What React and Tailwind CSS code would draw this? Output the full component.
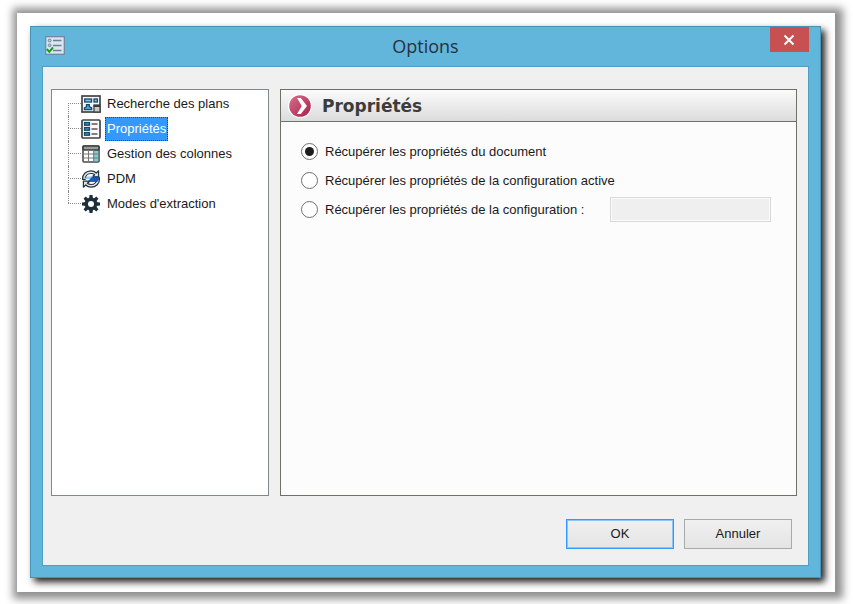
import { useState } from "react";

function PlansIcon() {
  return (
    <svg viewBox="0 0 20 18" className="h-[18px] w-5 shrink-0" aria-hidden="true">
      <rect x="1" y="1" width="18" height="16" fill="#f4f6f7" stroke="#444" strokeWidth="1.700" />
      <rect x="3.7" y="4" width="6.8" height="3" fill="#7fc4e8" stroke="#164a6b" strokeWidth="1.300" />
      <rect x="13" y="4" width="3.4" height="3" fill="#7fc4e8" stroke="#164a6b" strokeWidth="1.300" />
      <path d="M5.5 9.7h2.800v2l2.400 1.200v1.800H3.400v-1.800l2.100-1.200z" fill="#4fa8d8" stroke="#164a6b" strokeWidth="1.300" />
      <rect x="13" y="10" width="6" height="7" fill="#c9c9c9" stroke="#444" strokeWidth="1.300" />
      <path d="M12.500 11h6.500" stroke="#3a3a3a" strokeWidth="2" />
    </svg>
  );
}

function PropertiesIcon() {
  return (
    <svg viewBox="0 0 20 20" className="h-5 w-5 shrink-0" aria-hidden="true">
      <rect x="1" y="1" width="18" height="18" rx="1" fill="#fafafa" stroke="#444" strokeWidth="1.700" />
      {[3.6, 8.6, 13.6].map((y) => (
        <g key={y}>
          <rect x="3.6" y={y} width="4.8" height="2.6" fill="#3f9fd0" stroke="#164a6b" strokeWidth="1.4" />
          <path d={`M10.5 ${y + 1.4}h6`} stroke="#4b4b4b" strokeWidth="1.4" />
        </g>
      ))}
    </svg>
  );
}

function ColumnsIcon() {
  return (
    <svg viewBox="0 0 20 18" className="h-[18px] w-5 shrink-0" aria-hidden="true">
      <rect x="2" y="1" width="16" height="16" rx="1" fill="#fff" stroke="#4b4b4b" strokeWidth="1.6" />
      <rect x="13" y="5" width="4.200" height="11.200" fill="#74d4dc" />
      <rect x="2" y="1" width="16" height="4" rx="1" fill="#9a9a9a" stroke="#3f3f3f" strokeWidth="1.6" />
      <path d="M7.500 5V17M12.700 5V17M2 9h16M2 13h16" stroke="#777" strokeWidth="1.1" />
    </svg>
  );
}

function PdmIcon() {
  return (
    <svg viewBox="0 0 20 20" className="h-5 w-5 shrink-0" aria-hidden="true">
      <path d="M1.500 10.500C1.200 5.500 5 1.800 10 1.800c2.200 0 4 .8 5.300 2.200L17.600 1.800v6h-6.200l2.200-2.100C12.500 4.800 11.200 4.500 10 4.500 6.500 4.500 4.300 7 4.200 10.300z" fill="#dfe6ea" stroke="#25323c" strokeWidth="1.200" strokeLinejoin="round" />
      <path d="M18.500 9.500C18.800 14.500 15 18.200 10 18.200c-2.200 0-4-.8-5.300-2.200L2.400 18.200v-6h6.200l-2.200 2.100c1.100.9 2.400 1.200 3.600 1.200 3.500 0 5.700-2.500 5.800-5.800z" fill="#dfe6ea" stroke="#25323c" strokeWidth="1.200" strokeLinejoin="round" />
      <path d="M5.500 7.800l7-.8-1.800 3H3.200z" fill="#8ecbf5" />
      <path d="M9.200 10.200L11.500 8h7.300l-2.600 4.600H7.200z" fill="#1559c8" stroke="#12305c" strokeWidth=".6" />
    </svg>
  );
}

function GearIcon() {
  return (
    <svg viewBox="0 0 20 20" className="h-5 w-5 shrink-0" aria-hidden="true">
      <g fill="#1c2f3a">
        {[0, 45, 90, 135, 180, 225, 270, 315].map((a) => (
          <path key={a} d="M8 5.200L8.500 1h3l.5 4.200z" transform={`rotate(${a} 10 10)`} />
        ))}
      </g>
      <circle cx="10" cy="10" r="4.700" fill="#fff" stroke="#1c2f3a" strokeWidth="3.400" />
    </svg>
  );
}

function WindowIcon() {
  return (
    <svg viewBox="0 0 20 19" className="h-[19px] w-5 shrink-0" aria-hidden="true">
      <rect x=".7" y=".7" width="18.600" height="17.600" fill="#dce6f2" stroke="#71899f" strokeWidth="1.300" />
      <path d="M8 4.500h8.500M8 9.500h8.500M8 14.500h8.500" stroke="#6c8093" strokeWidth="1.400" />
      <circle cx="4.600" cy="4.500" r="1.400" fill="#c3d2e2" stroke="#6c8093" />
      <circle cx="4.600" cy="9.300" r="1.400" fill="#c3d2e2" stroke="#6c8093" />
      <path d="M1.800 13l2.500 2.800L8 11.500" fill="none" stroke="#13a013" strokeWidth="2" />
    </svg>
  );
}

function ArrowBadge() {
  return (
    <svg viewBox="0 0 24 24" className="h-6 w-6 shrink-0" aria-hidden="true">
      <defs>
        <linearGradient id="badge" x1="0" y1="0" x2="1" y2="1">
          <stop offset="0" stopColor="#d8708c" />
          <stop offset="1" stopColor="#a81f49" />
        </linearGradient>
      </defs>
      <circle cx="12" cy="12" r="12" fill="#fff" />
      <circle cx="12" cy="12" r="10.800" fill="url(#badge)" />
      <path d="M9 4h3.800L19 12l-6.200 8H9L13.800 12z" fill="#fff" />
    </svg>
  );
}

const sections = [
  { name: "Recherche des plans", Icon: PlansIcon },
  { name: "Propriétés", Icon: PropertiesIcon },
  { name: "Gestion des colonnes", Icon: ColumnsIcon },
  { name: "PDM", Icon: PdmIcon },
  { name: "Modes d'extraction", Icon: GearIcon },
];

const sources = [
  { id: "document", label: "Récupérer les propriétés du document" },
  { id: "active", label: "Récupérer les propriétés de la configuration active" },
  { id: "named", label: "Récupérer les propriétés de la configuration :" },
];

function SectionTree({ selected, onSelect }) {
  return (
    <nav className="w-[218px] shrink-0 border border-[#828790] bg-white pt-px pl-4">
      <ul>
        {sections.map(({ name, Icon }, i) => (
          <li key={name} className="flex h-[25px] items-center">
            <span className="flex h-full w-[13px] shrink-0 flex-col">
              <span className={i === 0 ? "flex-1" : "flex-1 border-l border-dotted border-[#8a8a8a]"} />
              <span
                className={
                  i === sections.length - 1
                    ? "flex-1 border-t border-dotted border-[#8a8a8a]"
                    : "flex-1 border-t border-l border-dotted border-[#8a8a8a]"
                }
              />
            </span>
            <Icon />
            <button
              type="button"
              onClick={() => onSelect(name)}
              className={
                name === selected
                  ? "ml-1 h-6 border border-dotted border-[#5a3a10] bg-[#3399ff] px-px text-white"
                  : "ml-1 h-6 border border-transparent px-px"
              }
            >
              {name}
            </button>
          </li>
        ))}
      </ul>
    </nav>
  );
}

function SourceForm() {
  const [source, setSource] = useState("document");
  return (
    <div className="flex flex-col pt-[15px] pl-5">
      {sources.map(({ id, label }) => (
        <div key={id} className="flex h-[29px] items-center pr-[25px]">
          <input
            type="radio"
            id={id}
            name="source"
            checked={source === id}
            onChange={() => setSource(id)}
            className="grid h-[17px] w-[17px] shrink-0 appearance-none place-items-center rounded-full border border-[#707070] bg-white before:h-[9px] before:w-[9px] before:rounded-full checked:before:bg-[#1e1e1e]"
          />
          <label htmlFor={id} className="pl-[7px] whitespace-nowrap">
            {label}
          </label>
          {id === "named" && (
            <input
              type="text"
              aria-label="Configuration"
              disabled={source !== "named"}
              className="ml-auto h-[25px] w-[161px] min-w-0 border border-[#d9d9d9] bg-[#efefef] px-1 inset-ring inset-ring-[#fafafa]"
            />
          )}
        </div>
      ))}
    </div>
  );
}

export default function App() {
  const [selected, setSelected] = useState("Propriétés");
  return (
    <div className="flex min-h-screen overflow-hidden bg-white pt-[13px] pr-[18px] pb-3 pl-[17px] font-['Liberation_Sans',Arial,sans-serif] text-[13px] leading-5 text-[#1a1a1a]">
      <div className="flex flex-1 bg-white p-[13px] pr-[14px] pb-[14px] shadow-[2px_1px_8px_6px_#909090]">
        <main className="flex flex-1 flex-col border border-[#4793b5] bg-[#62b5db] px-[11px] pb-[11px] shadow-[4px_4px_7px_0_#202020]">
          <header className="flex h-[39px] items-start justify-between">
            <div className="flex w-[39px] pt-[9px] pl-[3px]">
              <WindowIcon />
            </div>
            <h1 className="pt-[7px] font-['Open_Sans','Noto_Sans',sans-serif] text-[18px] leading-6 text-[#263238]">Options</h1>
            <button type="button" aria-label="Fermer" className="grid h-[25px] w-[39px] place-items-center bg-[#c75050]">
              <svg viewBox="0 0 12 12" className="h-3 w-3" aria-hidden="true">
                <path d="M1.500 1.500l9 9M10.500 1.500l-9 9" stroke="#fff" strokeWidth="2" />
              </svg>
            </button>
          </header>
          <div className="flex flex-1 flex-col border border-[#4f9fc0] bg-[#f0f0f0] pt-[22px] pr-[11px] pb-4 pl-2">
            <div className="flex flex-1 gap-[11px]">
              <SectionTree selected={selected} onSelect={setSelected} />
              <section className="flex-1 border border-[#716f6a] bg-[#fcfcfc]">
                <div className="flex h-8 items-center gap-[10px] border-b border-[#716f6a] bg-linear-to-b from-[#fbfbfb] to-[#dcdcdc] pl-[7px]">
                  <ArrowBadge />
                  <h2 className="font-['DejaVu_Sans',Verdana,sans-serif] text-[17px] leading-6 font-bold text-[#3c3c3c]">{selected}</h2>
                </div>
                <SourceForm />
              </section>
            </div>
            <div className="mt-[23px] flex justify-end gap-[10px] pr-[5px]">
              <button type="button" className="h-[30px] w-[108px] border border-[#3399ff] bg-linear-to-b from-[#f0f0f0] to-[#e4e4e4] inset-ring inset-ring-[#8cc4ff]">
                OK
              </button>
              <button type="button" className="h-[30px] w-[108px] border border-[#a9a9a9] bg-linear-to-b from-[#f0f0f0] to-[#e4e4e4]">
                Annuler
              </button>
            </div>
          </div>
        </main>
      </div>
    </div>
  );
}
